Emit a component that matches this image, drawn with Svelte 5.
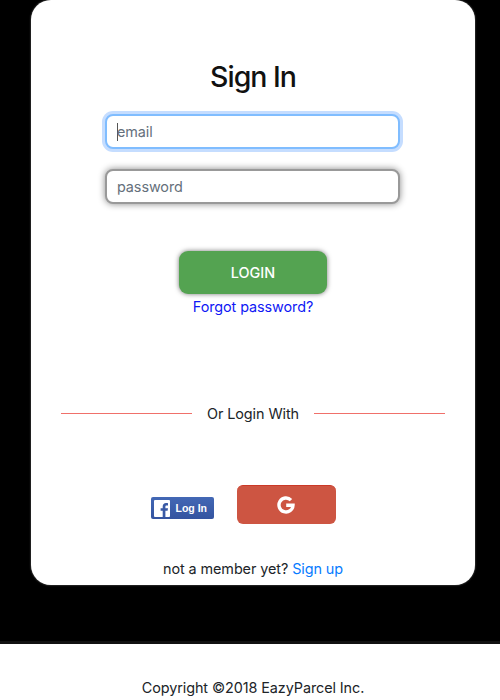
<script>
  const provider = 'Log In';
</script>

<div class="page">
  <main>
    <form class="card" onsubmit={(e) => e.preventDefault()}>
      <h1>Sign In</h1>
      <div class="field focused"><span class="caret"></span><span>email</span></div>
      <div class="field"><span>password</span></div>
      <button class="login">LOGIN</button>
      <a class="forgot" href="#forgot">Forgot password?</a>
      <div class="divider"><i></i><span>Or Login With</span><i></i></div>
      <div class="social">
        <button class="facebook" aria-label="Facebook">
          <svg width="16" height="17" viewBox="0 0 16 17">
            <rect width="16" height="17" rx="1" fill="#fff" />
            <path d="M8.7 17v-6.2H6.6V8.3h2.1V6.6c0-2.3 1.3-3.5 3.4-3.5.9 0 1.6.1 1.9.1v2.2h-1.3c-1 0-1.3.5-1.3 1.3v1.6H14l-.4 2.5h-2.2V17z" fill="#3a5aa5" />
          </svg>
          <span>{provider}</span>
        </button>
        <button class="google" aria-label="Google">
          <svg width="18" height="18" viewBox="0 0 18 18">
            <path d="M14 4.1A7 7 0 1 0 16 9.2H9.2" fill="none" stroke="#fff" stroke-width="3.4" />
          </svg>
        </button>
      </div>
      <p class="member">not a member yet? <a href="#signup">Sign up</a></p>
    </form>
  </main>
  <footer>Copyright ©2018 EazyParcel Inc.</footer>
</div>

<style>
  :global(body) { margin: 0; overflow: hidden; }
  .page { height: 700px; background: #fff; font: 14.4px/22px Inter, "Liberation Sans", sans-serif; letter-spacing: -.08px; color: #202428; overflow: hidden; }
  main { height: 644px; background: #000; box-sizing: border-box; border-bottom: 3px solid #111; padding: 0 25px 0 31px; }
  .card { height: 585px; box-sizing: border-box; background: #fff; border-radius: 20px; display: flex; flex-direction: column; align-items: center; padding-top: 59px; box-shadow: 0 0 2px #777; }
  h1 { margin: 0; font-size: 28.5px; line-height: 36px; font-weight: 500; letter-spacing: -1px; color: #111; }
  .field { box-sizing: border-box; width: 295px; height: 35px; flex: none; margin: 20px 1px 0 0; border: 2px solid #999; border-radius: 8px; background: #fff; box-shadow: 0 0 7px #888; padding-left: 10px; display: flex; align-items: center; color: #65707b; }
  .focused { margin-top: 19px; border-color: #80bdff; box-shadow: 0 0 0 3px #c5ddff; }
  .caret { width: 1px; height: 18px; background: #555; margin-right: -1px; }
  button { border: 0; padding: 0; font-family: inherit; }
  .login { width: 148px; height: 43px; flex: none; margin-top: 47px; border-radius: 9px; background: #54a351; color: #fff; font-size: 14.4px; font-weight: 500; box-shadow: 0 0 5px #777; }
  a { text-decoration: none; color: #087bff; }
  .forgot { margin-top: 2px; color: #1019f5; }
  .divider { width: 384px; height: 22px; margin-top: 84px; display: flex; align-items: center; justify-content: space-between; }
  .divider span { padding-top: 1px; }
  .divider i { width: 131px; height: 1px; background: #f0706a; }
  .social { width: 185px; height: 39px; margin-top: 61px; margin-left: -20px; display: flex; align-items: center; justify-content: space-between; }
  .facebook { width: 63px; height: 22px; margin-top: 7px; border-radius: 2px; background: linear-gradient(#4368b5, #3454a0); display: flex; align-items: center; padding-left: 3px; gap: 6px; color: #fff; font: 700 10.5px "Liberation Sans", Arial, sans-serif; box-sizing: border-box; white-space: nowrap; }
  .facebook svg { flex: none; }
  .google { width: 99px; height: 39px; border-radius: 6px; background: #cd5542; border-top: 1px solid #cb3927; display: grid; place-items: center; }
  .member { margin: 34px 0 0; }
  footer { padding: 33px 0 0 6px; text-align: center; }
</style>
